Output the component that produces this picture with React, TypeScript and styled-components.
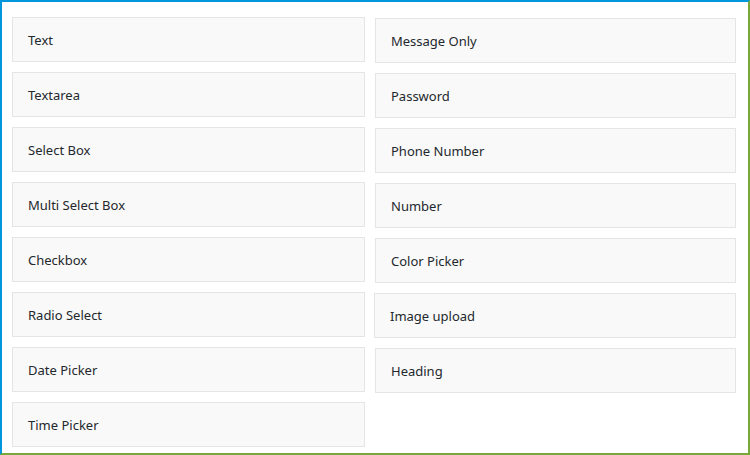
import styled, { createGlobalStyle } from "styled-components";

const GlobalStyles = createGlobalStyle`
  html, body {
    margin: 0;
    padding: 0;
    background: #ffffff;
  }
  *, *:before, *:after {
    box-sizing: border-box;
  }
`;

const leftFields = [
  "Text",
  "Textarea",
  "Select Box",
  "Multi Select Box",
  "Checkbox",
  "Radio Select",
  "Date Picker",
  "Time Picker",
];

const rightFields = [
  "Message Only",
  "Password",
  "Phone Number",
  "Number",
  "Color Picker",
  "Image upload",
  "Heading",
];

export default function App() {
  return (
    <>
      <GlobalStyles />
      <Frame>
        <Column $width={353}>
          {leftFields.map((label) => (
            <FieldItem key={label}>{label}</FieldItem>
          ))}
        </Column>
        <Column $width={361} $offset={1}>
          {rightFields.map((label) => (
            <FieldItem key={label} $nudge={label === "Image upload"}>
              {label}
            </FieldItem>
          ))}
        </Column>
      </Frame>
    </>
  );
}

const Frame = styled.div`
  width: 750px;
  height: 455px;
  border-top: 2px solid #0096dc;
  border-left: 2px solid #0096dc;
  border-right: 2px solid #76a937;
  border-bottom: 2px solid #76a937;
  padding: 15px 0 0 10px;
  display: flex;
  align-items: flex-start;
  gap: 10px;
  overflow: hidden;
  font-family: "Noto Sans", "Open Sans", sans-serif;
`;

const Column = styled.div<{ $width: number; $offset?: number }>`
  width: ${(p) => p.$width}px;
  margin-top: ${(p) => p.$offset || 0}px;
  display: flex;
  flex-direction: column;
  gap: 10px;
`;

const FieldItem = styled.div<{ $nudge?: boolean }>`
  height: 45px;
  display: flex;
  align-items: center;
  padding: 0 15px;
  margin-left: ${(p) => (p.$nudge ? "-1px" : "0")};
  background: #f9f9f9;
  border: 1px solid #e5e5e5;
  color: #23282d;
  font-size: 13px;
`;
